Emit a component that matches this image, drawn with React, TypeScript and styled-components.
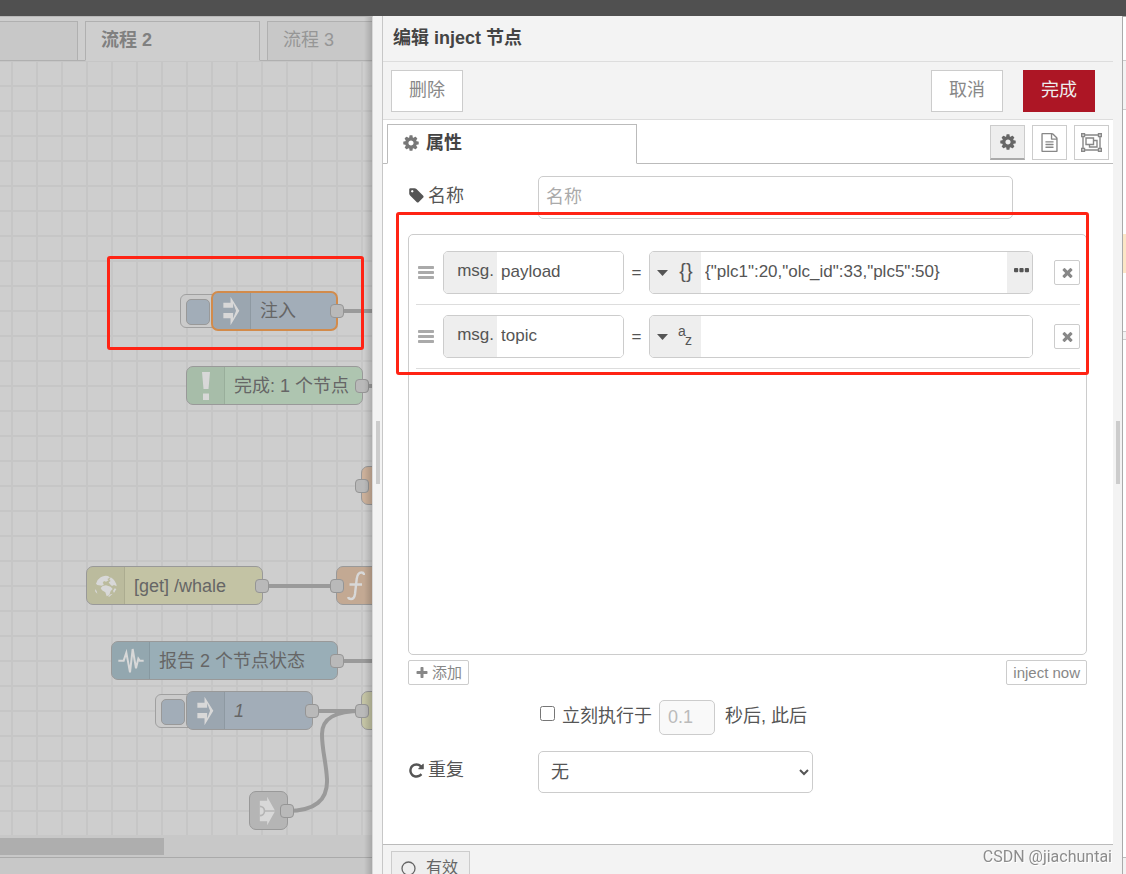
import React from "react";
import styled, { createGlobalStyle, css } from "styled-components";

const GlobalStyle = createGlobalStyle`
  * { box-sizing: border-box; }
  html, body, #root { height: 100%; }
  body {
    margin: 0;
    overflow: hidden;
    background: #f3f3f3;
    color: #555;
    font-family: "Liberation Sans", "Noto Sans CJK SC", sans-serif;
    font-size: 18px;
    line-height: 24px;
  }
  button, input, select { font: inherit; color: inherit; margin: 0; }
  button { cursor: pointer; padding: 0; }
`;

/* ---------- page frame ---------- */

const Page = styled.div`
  display: flex;
  flex-direction: column;
  height: 100vh;
`;

const TopBar = styled.header`
  flex: 0 0 16px;
  background: #505050;
`;

const Columns = styled.div`
  flex: 1;
  min-height: 0;
  display: grid;
  grid-template-columns: minmax(0, 373fr) minmax(0, 740fr) 13px;
`;

/* ---------- workspace ---------- */

const Workspace = styled.section`
  position: relative;
  display: flex;
  flex-direction: column;
  overflow: hidden;
  background: #c8c8c8;
  border-top: 1px solid #b8b8b8;
  border-right: 1px solid #d8d8d8;
`;

const EdgeShade = styled.div`
  position: absolute;
  top: 0;
  right: 0;
  bottom: 0;
  width: 8px;
  background: linear-gradient(to right, rgba(0, 0, 0, 0), rgba(0, 0, 0, 0.16));
`;

const FlowTabs = styled.nav`
  flex: 0 0 44px;
  display: flex;
  gap: 7px;
  padding-top: 4px;
  background: #cecece;
  box-shadow: inset 0 -1px #b0b0b0;
`;

const FlowTab = styled.button<{ $active?: boolean; $first?: boolean }>`
  flex: 0 0 ${(p) => (p.$first ? 78 : 175)}px;
  padding-left: 15px;
  padding-bottom: 2px;
  text-align: left;
  border: 1px solid #b0b0b0;
  border-left-width: ${(p) => (p.$first ? 0 : 1)}px;
  background: #c8c8c8;
  color: #969696;
  ${(p) =>
    p.$active &&
    css`
      background: #cecece;
      border-bottom-color: #cecece;
      color: #808080;
      font-weight: bold;
    `}
`;

const Canvas = styled.div`
  position: relative;
  flex: 1;
  overflow: hidden;
  background-color: #cecece;
  background-image: linear-gradient(to right, #c6c6c6 2px, transparent 2px),
    linear-gradient(to bottom, #c6c6c6 2px, transparent 2px);
  background-size: 25px 25px;
  background-position: 11px 24px;
`;

const Wires = styled.svg`
  position: absolute;
  inset: 0;
  fill: none;
  stroke: #9a9a9a;
  stroke-width: 4;
`;

const Node = styled.div<{ $x: number; $y: number; $w: number; $fill: string; $selected?: boolean }>`
  position: absolute;
  left: ${(p) => p.$x}px;
  top: ${(p) => p.$y}px;
  width: ${(p) => p.$w}px;
  height: ${(p) => (p.$selected ? 40 : 39)}px;
  display: flex;
  align-items: center;
  overflow: hidden;
  border: ${(p) => (p.$selected ? "2px solid #d28b4b" : "1px solid #999")};
  border-radius: 7px;
  background: ${(p) => p.$fill};
  color: #666;
  white-space: nowrap;
`;

const NodeIcon = styled.span<{ $plain?: boolean }>`
  flex: 0 0 ${(p) => (p.$plain ? 34 : 38)}px;
  align-self: stretch;
  display: flex;
  align-items: center;
  justify-content: center;
  background: ${(p) => (p.$plain ? "none" : "rgba(0, 0, 0, 0.04)")};
  border-right: ${(p) => (p.$plain ? 0 : 1)}px solid rgba(0, 0, 0, 0.08);
  color: #d8d8d8;
`;

const NodeLabel = styled.span<{ $italic?: boolean }>`
  padding-left: 9px;
  font-style: ${(p) => (p.$italic ? "italic" : "normal")};
`;

const TriggerPad = styled.button<{ $x: number; $y: number }>`
  position: absolute;
  left: ${(p) => p.$x}px;
  top: ${(p) => p.$y}px;
  width: 40px;
  height: 34px;
  padding: 4px 5px;
  border: 1px solid #a0a0a0;
  border-radius: 6px;
  background: #cbcbcb;
  text-align: left;
  &::before {
    content: "";
    display: block;
    width: 22px;
    height: 24px;
    border: 1px solid #999;
    border-radius: 5px;
    background: #a2adb8;
  }
`;

const Port = styled.span<{ $x: number; $y: number }>`
  position: absolute;
  left: ${(p) => p.$x - 7}px;
  top: ${(p) => p.$y - 7}px;
  width: 14px;
  height: 14px;
  border: 1px solid #959595;
  border-radius: 4px;
  background: #b9b9b9;
`;

const CanvasMark = styled.div`
  position: absolute;
  left: 107px;
  top: 195px;
  width: 257px;
  height: 94px;
  border: 3px solid #ff2314;
  border-radius: 3px;
`;

const ScrollTrack = styled.div`
  flex: 0 0 22px;
  padding: 3px 0 2px;
`;

const ScrollThumb = styled.div`
  width: 44%;
  height: 17px;
  background: #aeaeae;
`;

const WorkspaceFooter = styled.div`
  flex: 0 0 17px;
  border-top: 1px solid #aaa;
`;

/* ---------- edit tray ---------- */

const Tray = styled.section`
  display: flex;
  min-height: 0;
`;

const Gutter = styled.div`
  flex: 0 0 9px;
  display: flex;
  align-items: center;
  justify-content: center;
  background: #f3f3f3;
`;

const Grip = styled.span`
  width: 4px;
  height: 63px;
  margin-top: 14px;
  background: #ccc;
`;

const TrayMain = styled.div`
  flex: 1;
  min-width: 0;
  display: flex;
  flex-direction: column;
  border-left: 1px solid #c7c7c7;
  background: #fff;
`;

const TrayTitle = styled.h1`
  flex: 0 0 46px;
  margin: 0;
  padding: 10px;
  font-size: 18px;
  line-height: 24px;
  color: #444;
  background: #f3f3f3;
  border-bottom: 1px solid #ddd;
`;

const TrayToolbar = styled.div`
  flex: 0 0 58px;
  display: flex;
  gap: 20px;
  padding: 8px 18px 7px 8px;
  background: #f3f3f3;
  border-bottom: 1px solid #ddd;
`;

const ToolbarButton = styled.button<{ $primary?: boolean; $pushed?: boolean }>`
  width: 72px;
  height: 42px;
  padding-bottom: 2px;
  margin-right: ${(p) => (p.$pushed ? "auto" : 0)};
  border: 1px solid ${(p) => (p.$primary ? "#ad1625" : "#ccc")};
  background: ${(p) => (p.$primary ? "#ad1625" : "#fff")};
  color: ${(p) => (p.$primary ? "#eee" : "#888")};
`;

const EditorTabs = styled.div`
  flex: 0 0 44px;
  display: flex;
  gap: 7px;
  padding: 4px 4px 0 4px;
  box-shadow: inset 0 -1px #bbb;
`;

const EditorTab = styled.button`
  width: 250px;
  display: flex;
  align-items: center;
  gap: 6px;
  padding: 0 14px 2px;
  margin-right: auto;
  border: 1px solid #bbb;
  border-bottom-color: #fff;
  background: #fff;
  color: #444;
  font-weight: bold;
  svg { color: #777; }
`;

const IconTab = styled.button<{ $active?: boolean }>`
  width: 35px;
  height: 35px;
  margin-top: 1px;
  display: flex;
  align-items: center;
  justify-content: center;
  border: 1px solid #ccc;
  background: #fff;
  color: #888;
  ${(p) =>
    p.$active &&
    css`
      background: #eee;
      border-bottom: 2px solid #aaa;
      color: #666;
    `}
`;

const Form = styled.form`
  flex: 1;
  min-height: 0;
  overflow: hidden;
  padding: 12px 26px 0 25px;
`;

const FormRow = styled.div`
  display: flex;
  align-items: center;
`;

const Label = styled.label`
  flex: 0 0 130px;
  display: flex;
  align-items: center;
  gap: 3px;
  padding-bottom: 4px;
`;

const field = css`
  border: 1px solid #ccc;
  border-radius: 5px;
  background: #fff;
  outline: none;
`;

const NameInput = styled.input`
  ${field}
  width: 70%;
  height: 43px;
  padding: 0 7px;
  &::placeholder { color: #aaa; }
`;

const ListBox = styled.div`
  position: relative;
  height: 421px;
  margin-top: 15px;
  padding: 6px 6px 0 7px;
  border: 1px solid #ccc;
  border-radius: 5px;
`;

const ListMark = styled.div`
  position: absolute;
  left: -13px;
  right: -3px;
  top: -23px;
  height: 163px;
  border: 3px solid #ff2314;
  border-radius: 3px;
  pointer-events: none;
`;

const PropertyList = styled.ul`
  list-style: none;
  margin: 0;
  padding: 0;
`;

const PropertyRow = styled.li`
  display: flex;
  align-items: center;
  height: 64px;
  border-bottom: 1px solid #ddd;
  padding-left: 2px;
`;

const TypedField = styled.div<{ $grow?: boolean }>`
  ${field}
  flex: ${(p) => (p.$grow ? "1 1 0" : "0 0 181px")};
  min-width: 0;
  display: flex;
  height: 43px;
  margin-left: ${(p) => (p.$grow ? 0 : 9)}px;
  overflow: hidden;
`;

const TypeButton = styled.button<{ $w: number }>`
  flex: 0 0 ${(p) => p.$w}px;
  display: flex;
  align-items: center;
  justify-content: flex-end;
  gap: 10px;
  padding: 0 7px;
  border: 0;
  background: #eee;
  font-size: 17px;
`;

const MsgButton = styled(TypeButton)`
  padding: 0 3px 4px 12px;
`;

const MoreButton = styled(TypeButton)`
  padding: 0 3px 5px;
`;

const FieldInput = styled.input`
  flex: 1;
  width: 0;
  min-width: 0;
  border: 0;
  outline: none;
  padding: 0 4px 2px;
  background: #fff;
  font-size: 17px;
`;

const Equals = styled.span`
  flex: 0 0 25px;
  text-align: center;
  font-size: 17px;
`;

const Braces = styled.span`
  width: 16px;
  padding-bottom: 4px;
  font-size: 20px;
`;

const AlphaType = styled.span`
  width: 16px;
  display: grid;
  grid-template-columns: 7px 7px;
  padding-bottom: 2px;
  font-size: 14px;
  line-height: 9px;
  span:last-child { grid-area: 2 / 2; }
`;

const SmallButton = styled.button`
  height: 25px;
  display: flex;
  align-items: center;
  gap: 3px;
  padding: 0 6px;
  border: 1px solid #ccc;
  border-radius: 2px;
  background: #fff;
  color: #888;
  font-size: 15px;
  line-height: 20px;
`;

const RemoveButton = styled(SmallButton)`
  flex: 0 0 26px;
  justify-content: center;
  margin-left: 21px;
  padding: 0;
`;

const ListActions = styled.div`
  display: flex;
  justify-content: space-between;
  padding-top: 5px;
`;

const OnceRow = styled(FormRow)`
  padding: 15px 0 16px 132px;
`;

const OnceCheck = styled.input`
  width: 15px;
  height: 15px;
  margin: 0 7px 8px 0;
`;

const OnceLabel = styled.label`
  padding-bottom: 4px;
`;

const DelayInput = styled.input`
  ${field}
  width: 56px;
  height: 35px;
  margin: 0 10px 0 7px;
  padding: 0 8px;
  background: #f9f9f9;
  &:disabled { color: #bbb; }
`;

const RepeatSelect = styled.select`
  ${field}
  width: 275px;
  height: 42px;
  padding: 0 4px 0 8px;
`;

const TrayFooter = styled.footer`
  flex: 0 0 30px;
  overflow: hidden;
  padding: 6px 8px 0;
  border-top: 1px solid #bbb;
  background: #f3f3f3;
`;

const EnabledButton = styled.button`
  width: 79px;
  height: 34px;
  display: flex;
  align-items: center;
  gap: 10px;
  padding-left: 9px;
  border: 1px solid #ccc;
  background: #eee;
  color: #666;
  font-size: 16px;
  line-height: 16px;
`;

/* ---------- sidebar edge ---------- */

const SideEdge = styled.aside`
  display: flex;
  border-left: 1px solid #f3f3f3;
`;

const SideGutter = styled(Gutter)`
  flex-basis: 8px;
`;

const SidePanel = styled.div`
  flex: 1;
  display: flex;
  flex-direction: column;
  border: 0 solid #aaa;
  border-width: 1px 0 0 1px;
  background: #fff;
`;

const SideBand = styled.div<{ $h: number; $bg: string; $line?: boolean }>`
  flex: 0 0 ${(p) => p.$h}px;
  background: ${(p) => p.$bg};
  border: solid #ccc;
  border-width: ${(p) => (p.$line ? "1px 0" : 0)};
`;

const SideFooter = styled.div`
  flex: 0 0 17px;
  margin-top: auto;
  background: #f3f3f3;
  border-top: 1px solid #bbb;
`;

const Watermark = styled.div`
  position: fixed;
  right: 14px;
  bottom: 7px;
  font-size: 16px;
  line-height: 20px;
  color: #8c8c8c;
  font-family: Roboto, "Liberation Sans", sans-serif;
  text-shadow: 1px 1px #fff;
`;

/* ---------- icons ---------- */

const GLYPHS = {
  cog: "M1152 896q0-106-75-181t-181-75-181 75-75 181 75 181 181 75 181-75 75-181zm512-109v222q0 12-8 23t-20 13l-185 28q-19 54-39 91 35 50 107 138 10 12 10 25t-9 23q-27 37-99 108t-94 71q-12 0-26-9l-138-108q-44 23-91 38-16 136-29 186-7 28-36 28h-222q-14 0-24.5-8.5t-11.5-21.5l-28-184q-49-16-90-37l-141 107q-10 9-25 9-14 0-25-11-126-114-165-168-7-10-7-23 0-12 8-23 15-21 51-66.5t54-70.5q-27-50-41-99l-183-27q-13-2-21-12.5t-8-23.5v-222q0-12 8-23t19-13l186-28q14-46 39-92-40-57-107-138-10-12-10-24 0-10 9-23 26-36 98.5-107.5t94.5-71.5q13 0 26 10l138 107q44-23 91-38 16-136 29-186 7-28 36-28h222q14 0 24.5 8.5t11.5 21.5l28 184q49 16 90 37l142-107q9-9 24-9 13 0 25 10 129 119 165 170 7 8 7 22 0 12-8 23-15 21-51 66.5t-54 70.5q26 50 41 98l183 28q13 2 21 12.5t8 23.5z",
  tag: "M576 448q0-53-37.5-90.5t-90.5-37.5-90.5 37.5-37.5 90.5 37.5 90.5 90.5 37.5 90.5-37.5 37.5-90.5zm1067 576q0 53-37 90l-491 492q-39 37-91 37-53 0-90-37l-715-716q-38-37-64.5-101t-26.5-117v-416q0-52 38-90t90-38h416q53 0 117 26.5t102 64.5l715 714q37 39 37 91z",
  repeat: "M1664 256v448q0 26-19 45t-45 19h-448q-42 0-59-40-17-39 14-69l138-138q-148-137-349-137-104 0-198.5 40.5t-163.5 109.5-109.5 163.5-40.5 198.5 40.5 198.5 109.5 163.5 163.5 109.5 198.5 40.5q119 0 225-52t179-147q7-10 23-12 15 0 25 9l137 138q9 8 9.5 20.5t-7.5 22.5q-109 132-264 204.5t-327 72.5q-156 0-298-61t-245-164-164-245-61-298 61-298 164-245 245-164 298-61q147 0 284.5 55.5t244.5 156.5l130-129q29-31 70-14 39 17 39 59z",
  plus: "M1600 736v192q0 40-28 68t-68 28h-416v416q0 40-28 68t-68 28h-192q-40 0-68-28t-28-68v-416h-416q-40 0-68-28t-28-68v-192q0-40 28-68t68-28h416v-416q0-40 28-68t68-28h192q40 0 68 28t28 68v416h416q40 0 68 28t28 68z",
  times: "M1490 1322q0 40-28 68l-136 136q-28 28-68 28t-68-28l-294-294-294 294q-28 28-68 28t-68-28l-136-136q-28-28-28-68t28-68l294-294-294-294q-28-28-28-68t28-68l136-136q28-28 68-28t68 28l294 294 294-294q28-28 68-28t68 28l136 136q28 28 28 68t-28 68l-294 294 294 294q28 28 28 68z",
  file: "M1596 380q28 28 48 76t20 88v1152q0 40-28 68t-68 28h-1344q-40 0-68-28t-28-68v-1600q0-40 28-68t68-28h896q40 0 88 20t76 48zm-444-244v376h376q-10-29-22-41l-313-313q-12-12-41-22zm384 1528v-1024h-416q-40 0-68-28t-28-68v-416h-768v1536h1280zm-1024-864q0-14 9-23t23-9h704q14 0 23 9t9 23v64q0 14-9 23t-23 9h-704q-14 0-23-9t-9-23v-64zm736 224q14 0 23 9t9 23v64q0 14-9 23t-23 9h-704q-14 0-23-9t-9-23v-64q0-14 9-23t23-9h704zm0 256q14 0 23 9t9 23v64q0 14-9 23t-23 9h-704q-14 0-23-9t-9-23v-64q0-14 9-23t23-9h704z",
};

const Glyph = ({ name, size }: { name: keyof typeof GLYPHS; size: number }) => (
  <svg width={size} height={size} viewBox="0 0 1792 1792" fill="currentColor" aria-hidden="true">
    <path d={GLYPHS[name]} />
  </svg>
);

const GroupIcon = () => (
  <svg width="21" height="19" viewBox="0 0 21 19" fill="none" stroke="currentColor" strokeWidth="1.4" aria-hidden="true">
    <path d="M3.500 2h14M3.500 17h14M2 3.500v12M19 3.500v12" />
    <path d="M.7.700h2.800v2.800H.7zM17.500.700h2.800v2.800h-2.800zM.7 15.500h2.800v2.800H.7zM17.500 15.500h2.800v2.800h-2.800z" />
    <path d="M5 5h7.500v6.500H5zM12.500 7.500H16v6.500H8.500v-2.500" />
  </svg>
);

const GripIcon = () => (
  <svg width="16" height="14" viewBox="0 0 16 14" fill="#aaa" aria-hidden="true">
    <rect width="16" height="3" y="0" rx=".8" />
    <rect width="16" height="3" y="5" rx=".8" />
    <rect width="16" height="3" y="10" rx=".8" />
  </svg>
);

const DotsIcon = () => (
  <svg width="15" height="5" viewBox="0 0 15 5" fill="#555" aria-hidden="true">
    <rect width="4.200" height="4.200" rx="1" />
    <rect x="5.400" width="4.200" height="4.200" rx="1" />
    <rect x="10.800" width="4.200" height="4.200" rx="1" />
  </svg>
);

const CaretIcon = () => (
  <svg width="11" height="6" viewBox="0 0 11 6" fill="#555" aria-hidden="true">
    <path d="M0 0h11L5.500 6z" />
  </svg>
);

const InjectIcon = () => (
  <svg width="17" height="30" viewBox="396 168 50 92" fill="currentColor" aria-hidden="true">
    <path d="M396 189H418V170L445 213L418 258V236H396V220H426V237L435 213L426 190V204H396Z" />
  </svg>
);

const AlertIcon = () => (
  <svg width="8" height="28" viewBox="0 0 8 28" fill="currentColor" aria-hidden="true">
    <path d="M0 0h8L6.500 17h-5zM1 21.500h6V28H1z" />
  </svg>
);

const GlobeIcon = () => (
  <svg width="24" height="22" viewBox="0 0 72 66" fill="currentColor" aria-hidden="true">
    <path d="M20 7Q30 0 42 3L48 8L40 12L44 16L36 20L30 18L26 24L30 28L24 32L10 30L6 26Q10 13 20 7Z" />
    <path d="M50 7Q66 17 68 34L60 30L54 33L48 28L44 22L50 18L46 14Z" />
    <path d="M26 33L36 31L50 35L56 42L50 48L46 60L38 64L34 52L24 46L20 39Z" />
    <path d="M62 40L67 42L60 54L57 48ZM3 42L8 48L10 56L4 50ZM50 58L56 56L46 65L42 64Z" />
  </svg>
);

const FunctionIcon = () => (
  <svg width="18" height="30" viewBox="0 0 18 30" fill="none" stroke="currentColor" strokeWidth="2.400" aria-hidden="true">
    <path d="M17 4Q17 1.500 14.500 1.500Q10.500 1.500 9.700 8L8 23Q7.300 28 4 28Q1.500 28 1.200 26M2.500 13.500H15" />
  </svg>
);

const PulseIcon = () => (
  <svg width="26" height="31" viewBox="0 0 78 93" fill="none" stroke="currentColor" strokeWidth="6" aria-hidden="true">
    <path d="M1 47H17L25 23L36 82L44 12L54 70L61 41L65 47H77" />
  </svg>
);

const LinkInIcon = () => (
  <svg width="17" height="30" viewBox="0 0 50 90" aria-hidden="true">
    <path fill="currentColor" d="M2 14H24V2L48 45L24 88V76H2Z" />
    <path fill="none" stroke="#b5b5b5" strokeWidth="5" d="M2 31A14 14 0 0 1 2 59M16 45H48" />
  </svg>
);

/* ---------- data ---------- */

const PORTS = [
  [337, 250],
  [362, 325],
  [362, 425],
  [262, 525],
  [337, 525],
  [337, 600],
  [312, 650],
  [362, 650],
  [287, 750],
];

const WIRES = [
  "M337 250H400",
  "M362 325H400",
  "M262 525H337",
  "M337 600H400",
  "M312 650H362",
  "M287 750C315 750 328 739 327 718C326 700 322 690 322 673C322 657 335 650 362 650",
];

export default function App() {
  return (
    <>
      <GlobalStyle />
      <Page>
        <TopBar />
        <Columns>
          <Workspace>
            <FlowTabs>
              <FlowTab $first aria-label="1" />
              <FlowTab $active>流程 2</FlowTab>
              <FlowTab>流程 3</FlowTab>
            </FlowTabs>
            <Canvas>
              <Wires width="400" height="774">
                {WIRES.map((d) => (
                  <path key={d} d={d} />
                ))}
              </Wires>
              <TriggerPad $x={180} $y={233} aria-label="inject" />
              <Node $x={211} $y={230} $w={127} $fill="#a2adb8" $selected>
                <NodeIcon><InjectIcon /></NodeIcon>
                <NodeLabel>注入</NodeLabel>
              </Node>
              <Node $x={186} $y={305} $w={177} $fill="#aec5b0">
                <NodeIcon><AlertIcon /></NodeIcon>
                <NodeLabel>完成: 1 个节点</NodeLabel>
              </Node>
              <Node $x={361} $y={405} $w={127} $fill="#cbb09a" />
              <Node $x={86} $y={505} $w={177} $fill="#c3c3a4">
                <NodeIcon><GlobeIcon /></NodeIcon>
                <NodeLabel>[get] /whale</NodeLabel>
              </Node>
              <Node $x={336} $y={505} $w={127} $fill="#cbb09a">
                <NodeIcon><FunctionIcon /></NodeIcon>
              </Node>
              <Node $x={111} $y={580} $w={227} $fill="#99aeb7">
                <NodeIcon><PulseIcon /></NodeIcon>
                <NodeLabel>报告 2 个节点状态</NodeLabel>
              </Node>
              <TriggerPad $x={155} $y={633} aria-label="inject" />
              <Node $x={186} $y={630} $w={127} $fill="#a2adb8">
                <NodeIcon><InjectIcon /></NodeIcon>
                <NodeLabel $italic>1</NodeLabel>
              </Node>
              <Node $x={361} $y={630} $w={127} $fill="#c3c3a4" />
              <Node $x={249} $y={730} $w={39} $fill="#b5b5b5">
                <NodeIcon $plain><LinkInIcon /></NodeIcon>
              </Node>
              {PORTS.map(([x, y]) => (
                <Port key={`${x}-${y}`} $x={x} $y={y} />
              ))}
              <CanvasMark />
            </Canvas>
            <ScrollTrack><ScrollThumb /></ScrollTrack>
            <WorkspaceFooter />
            <EdgeShade />
          </Workspace>

          <Tray>
            <Gutter><Grip /></Gutter>
            <TrayMain>
              <TrayTitle>编辑 inject 节点</TrayTitle>
              <TrayToolbar>
                <ToolbarButton $pushed>删除</ToolbarButton>
                <ToolbarButton>取消</ToolbarButton>
                <ToolbarButton $primary>完成</ToolbarButton>
              </TrayToolbar>
              <EditorTabs>
                <EditorTab><Glyph name="cog" size={18} />属性</EditorTab>
                <IconTab $active aria-label="属性"><Glyph name="cog" size={18} /></IconTab>
                <IconTab aria-label="描述"><Glyph name="file" size={19} /></IconTab>
                <IconTab aria-label="外观"><GroupIcon /></IconTab>
              </EditorTabs>
              <Form onSubmit={(e) => e.preventDefault()}>
                <FormRow>
                  <Label htmlFor="node-name"><Glyph name="tag" size={17} />名称</Label>
                  <NameInput id="node-name" placeholder="名称" />
                </FormRow>
                <ListBox>
                  <PropertyList>
                    <PropertyRow>
                      <GripIcon />
                      <TypedField>
                        <MsgButton type="button" $w={53}>msg.</MsgButton>
                        <FieldInput aria-label="属性 1" defaultValue="payload" />
                      </TypedField>
                      <Equals>=</Equals>
                      <TypedField $grow>
                        <TypeButton type="button" $w={51}><CaretIcon /><Braces>{"{}"}</Braces></TypeButton>
                        <FieldInput aria-label="值 1" defaultValue={'{"plc1":20,"olc_id":33,"plc5":50}'} />
                        <MoreButton type="button" $w={25} aria-label="展开"><DotsIcon /></MoreButton>
                      </TypedField>
                      <RemoveButton type="button" aria-label="删除"><Glyph name="times" size={15} /></RemoveButton>
                    </PropertyRow>
                    <PropertyRow>
                      <GripIcon />
                      <TypedField>
                        <MsgButton type="button" $w={53}>msg.</MsgButton>
                        <FieldInput aria-label="属性 2" defaultValue="topic" />
                      </TypedField>
                      <Equals>=</Equals>
                      <TypedField $grow>
                        <TypeButton type="button" $w={51}>
                          <CaretIcon />
                          <AlphaType><span>a</span><span>z</span></AlphaType>
                        </TypeButton>
                        <FieldInput aria-label="值 2" />
                      </TypedField>
                      <RemoveButton type="button" aria-label="删除"><Glyph name="times" size={15} /></RemoveButton>
                    </PropertyRow>
                  </PropertyList>
                  <ListMark />
                </ListBox>
                <ListActions>
                  <SmallButton type="button"><Glyph name="plus" size={14} />添加</SmallButton>
                  <SmallButton type="button">inject now</SmallButton>
                </ListActions>
                <OnceRow>
                  <OnceCheck id="once" type="checkbox" />
                  <OnceLabel htmlFor="once">立刻执行于</OnceLabel>
                  <DelayInput id="delay" defaultValue="0.1" disabled />
                  <OnceLabel htmlFor="delay">秒后, 此后</OnceLabel>
                </OnceRow>
                <FormRow>
                  <Label htmlFor="repeat"><Glyph name="repeat" size={17} />重复</Label>
                  <RepeatSelect id="repeat">
                    <option>无</option>
                  </RepeatSelect>
                </FormRow>
              </Form>
              <TrayFooter>
                <EnabledButton>
                  <svg width="15" height="15" viewBox="0 0 15 15" fill="none" stroke="currentColor" strokeWidth="1.300" aria-hidden="true">
                    <circle cx="7.500" cy="7.500" r="6.500" />
                  </svg>
                  有效
                </EnabledButton>
              </TrayFooter>
            </TrayMain>
          </Tray>

          <SideEdge>
            <SideGutter><Grip /></SideGutter>
            <SidePanel>
              <SideBand $h={43} $bg="#fff" />
              <SideBand $h={50} $bg="#f3f3f3" $line />
              <SideBand $h={124} $bg="#fff" />
              <SideBand $h={39} $bg="#fce6c6" />
              <SideBand $h={58} $bg="#fff" />
              <SideBand $h={9} $bg="#f3f3f3" $line />
              <SideFooter />
            </SidePanel>
          </SideEdge>
        </Columns>
      </Page>
      <Watermark>CSDN @jiachuntai</Watermark>
    </>
  );
}
